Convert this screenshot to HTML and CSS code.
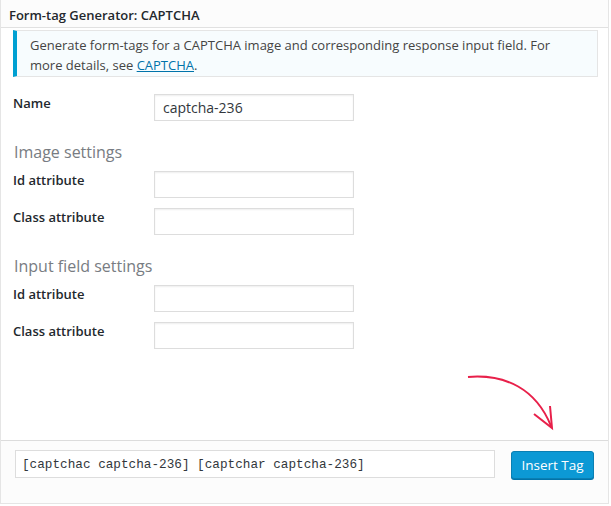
FILE: index.html
```html
<!DOCTYPE html>
<html>
<head>
<meta charset="utf-8">
<link rel="stylesheet" href="styles.css">
</head>
<body>
<div class="panel">
  <div class="titlebar">Form-tag Generator: CAPTCHA</div>
  <div class="content">
    <div class="notice">Generate form-tags for a CAPTCHA image and corresponding response input field. For more details, see <a href="#">CAPTCHA</a>.</div>
    <div class="row first"><span class="label">Name</span><input class="field" type="text" value="captcha-236"></div>
    <h3 class="section">Image settings</h3>
    <div class="row"><span class="label">Id attribute</span><input class="field" type="text"></div>
    <div class="row"><span class="label">Class attribute</span><input class="field" type="text"></div>
    <h3 class="section">Input field settings</h3>
    <div class="row"><span class="label">Id attribute</span><input class="field" type="text"></div>
    <div class="row"><span class="label">Class attribute</span><input class="field" type="text"></div>
    <svg class="arrow" width="110" height="70" viewBox="0 0 110 70">
      <path d="M7 8 C 45 5, 75 20, 90 57" fill="none" stroke="#e8204a" stroke-width="2"/>
      <path d="M73 45 L 91 59 L 89 37" fill="none" stroke="#e8204a" stroke-width="2"/>
    </svg>
  </div>
  <div class="footer">
    <input class="code" type="text" value="[captchac captcha-236] [captchar captcha-236]">
    <button class="insert">Insert Tag</button>
  </div>
</div>
</body>
</html>
```
FILE: styles.css
```css
html, body { margin: 0; padding: 0; background: #fff; }
body { font-family: "Open Sans", sans-serif; color: #23282d; font-size: 13px; }
.panel {
  width: 609px; height: 504px; box-sizing: border-box;
  border: 1px solid #e5e5e5; border-top: none; display: flex; flex-direction: column;
  background: #fff;
}
.titlebar {
  height: 28px; box-sizing: border-box; padding: 6px 0 0 8px;
  background: #fcfcfc; border-bottom: 1px solid #e1e1e1;
  font-weight: 600; font-size: 13px; line-height: 18px; color: #23282d;
}
.content { flex: 1; position: relative; padding: 2px 0 0 12px; }
.notice {
  width: 585px; box-sizing: border-box;
  border: 1px solid #e5e5e5; border-left: 4px solid #00a0d2;
  background: #f7fcfe; padding: 4px 12px 1px 13px;
  font-size: 13px; line-height: 20px; color: #444;
}
.notice a { color: #0073aa; text-decoration: underline; }
.row { display: flex; align-items: flex-start; height: 27px; margin-top: 10px; }
.row.first { margin-top: 17px; }
.label { width: 141px; font-size: 13px; font-weight: 600; line-height: 18px; color: #23282d; }
.field {
  width: 200px; height: 27px; box-sizing: border-box; margin: 0;
  border: 1px solid #ddd; box-shadow: inset 0 1px 2px rgba(0,0,0,0.07);
  padding: 2px 8px; font-family: "Open Sans", sans-serif; font-size: 14px; color: #32373c;
  background: #fff; outline: none;
}
.section {
  margin: 20px 0 0 1px; font-size: 16px; font-weight: 400; line-height: 22px; color: #787c82;
  height: 22px;
}
.section + .row { margin-top: 8px; }
.arrow { position: absolute; left: 460px; top: 341px; }
.footer {
  height: 63px; box-sizing: border-box; background: #fcfcfc; border-top: 1px solid #dcdcdc;
  display: flex; align-items: flex-start; padding: 9px 0 0 14px;
}
.code {
  width: 480px; height: 28px; box-sizing: border-box; margin: 0;
  border: 1px solid #ddd; background: #fff; padding: 0 6px;
  font-family: "Liberation Mono", monospace; font-size: 12.7px; color: #32373c; outline: none;
}
.insert {
  margin: 1px 0 0 16px; width: 83px; height: 28px; box-sizing: border-box;
  background: #0c99d5; border: 1px solid #0a7fb3; border-radius: 3px;
  color: #fff; font-family: "Open Sans", sans-serif; font-size: 13.5px; padding: 0;
  box-shadow: 0 1px 0 #0073aa;
}
```
